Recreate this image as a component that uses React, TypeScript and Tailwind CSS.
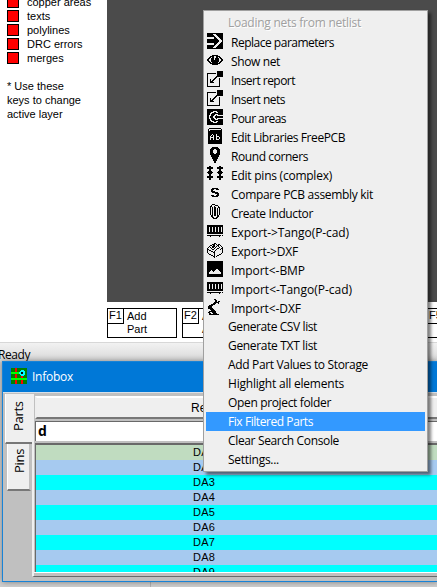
import React from "react";

type IconName = "swap" | "eye" | "insert" | "pour" | "book" | "pin" | "pins" | "s" | "clip" | "rail" | "box" | "image" | "robot";
type Item = { label: string; icon?: IconName; width: number; active?: boolean };

const items: Item[] = [
  { label: "Replace parameters", icon: "swap", width: 103 },
  { label: "Show net", icon: "eye", width: 49 },
  { label: "Insert report", icon: "insert", width: 64 },
  { label: "Insert nets", icon: "insert", width: 54 },
  { label: "Pour areas", icon: "pour", width: 55 },
  { label: "Edit Libraries FreePCB", icon: "book", width: 114 },
  { label: "Round corners", icon: "pin", width: 77 },
  { label: "Edit pins (complex)", icon: "pins", width: 101 },
  { label: "Compare PCB assembly kit", icon: "s", width: 142 },
  { label: "Create Inductor", icon: "clip", width: 82 },
  { label: "Export->Tango(P-cad)", icon: "rail", width: 118 },
  { label: "Export->DXF", icon: "box", width: 67 },
  { label: "Import<-BMP", icon: "image", width: 74 },
  { label: "Import<-Tango(P-cad)", icon: "rail", width: 121 },
  { label: "Import<-DXF", icon: "robot", width: 70 },
  { label: "Generate CSV list", width: 89 },
  { label: "Generate TXT list", width: 89 },
  { label: "Add Part Values to Storage", width: 140 },
  { label: "Highlight all elements", width: 116 },
  { label: "Open project folder", width: 103 },
  { label: "Fix Filtered Parts", width: 85, active: true },
  { label: "Clear Search Console", width: 111 },
  { label: "Settings...", width: 51 },
];

/* Text spread over a fixed advance width. */
function Label({ text, width, className = "" }: { text: string; width: number; className?: string }) {
  const ref = React.useRef<HTMLSpanElement>(null);
  const [gap, setGap] = React.useState(0);
  React.useLayoutEffect(() => {
    const el = ref.current;
    if (el) setGap((width - el.getBoundingClientRect().width) / text.length);
  }, [text, width]);
  return (
    <span ref={ref} className={"whitespace-pre " + className} style={{ letterSpacing: gap + "px" }}>
      {text}
    </span>
  );
}

/* Small monochrome bitmaps, one string per pixel row. */
const bitmaps: Partial<Record<IconName, string[]>> = {
  swap: [
    "################",
    "######...#######",
    "#######...######",
    "########...#####",
    ".......##...####",
    ".......###...###",
    "###########...##",
    "############...#",
    "############...#",
    "###########...##",
    ".......###...###",
    ".......##...####",
    "########...#####",
    "#######...######",
    "######...#######",
    "################",
  ],
  eye: [
    "................",
    "................",
    "................",
    ".....######.....",
    "...####..####...",
    "..##.##..##.##..",
    ".##.###.####.##.",
    "##..###.####..##",
    "##..########..##",
    ".##.########.##.",
    "..##.######.##..",
    "...##########...",
    ".....######.....",
    "................",
    "................",
    "................",
  ],
  insert: [
    "..........######",
    "..........######",
    "#########.######",
    "#.........######",
    "#.........######",
    "#........#######",
    "#.......##......",
    "#......##...#...",
    "#..#..##....#...",
    "#..#.##.....#...",
    "#..###......#...",
    "#..####.....#...",
    "#...........#...",
    "#...........#...",
    "#...........#...",
    "#############...",
  ],
  pour: [
    "################",
    "################",
    "######....######",
    "####...##..#####",
    "###..###########",
    "###.####...#####",
    "##..###..#......",
    "##.###..########",
    "##.###..########",
    "##..###..#......",
    "###.####...#####",
    "###..###########",
    "####...##..#####",
    "######....######",
    "################",
    "################",
  ],
  book: [
    "..############..",
    ".#............#.",
    ".#.############.",
    ".##############.",
    ".##############.",
    ".##############.",
    ".####.###.#####.",
    ".###.#.##.#####.",
    ".##.##.##...###.",
    ".##....##.##.##.",
    ".##.##.##.##.##.",
    ".##.##.##...###.",
    ".##############.",
    ".##############.",
    ".##############.",
    ".##############.",
  ],
  pin: [
    ".....######.....",
    "....########....",
    "...####..####...",
    "...###....###...",
    "...###....###...",
    "...###....###...",
    "...####..####...",
    "...##########...",
    "....########....",
    "....########....",
    ".....######.....",
    ".....######.....",
    "......####......",
    "......####......",
    ".......##.......",
    ".......##.......",
  ],
  pins: [
    "..##........##..",
    "######....######",
    "######....######",
    "..##........##..",
    "..##........##..",
    ".####......####.",
    "######....######",
    ".####......####.",
    "..##........##..",
    "..##........##..",
    "######....######",
    "######....######",
    "..##........##..",
    "..##........##..",
    "................",
    "................",
  ],
  s: [
    "................",
    "................",
    "................",
    ".....######.....",
    "....###..###....",
    "....##..........",
    "....####........",
    ".....######.....",
    "........####....",
    "..........##....",
    "....###..###....",
    ".....######.....",
    "................",
    "................",
    "................",
    "................",
  ],
  clip: [
    ".....###........",
    "....#...###.....",
    "...##..#...#....",
    "...#.#.##..##...",
    "...#.#.##.#.#...",
    "...#.#.##.#.#...",
    "...#.#.##.#.#...",
    "...#.#.##.#.#...",
    "...#.#.##.#.#...",
    "...#.#.##.#.#...",
    "...#.#.##.#.#...",
    "....##.##.##....",
    "....##....##....",
    ".....##..##.....",
    "......####......",
    "................",
  ],
  rail: [
    "................",
    "................",
    "################",
    "################",
    "##.##.##.##.##.#",
    "##.##.##.##.##.#",
    "##.##.##.##.##.#",
    "##.##.##.##.##.#",
    "##.##.##.##.##.#",
    "################",
    "################",
    "................",
    "##############.#",
    "...#........#...",
    "................",
    "................",
  ],
  box: [
    "................",
    ".......##.......",
    ".....###.#.##...",
    "...##.##..##.#..",
    "..#..###.#.#..#.",
    ".#.#.##.#...#..#",
    "#...#..#..##..##",
    "##...##..#...#.#",
    "#.##....#......#",
    "#...##.#.......#",
    "#.....##.......#",
    ".#.....#......#.",
    "..##...#....##..",
    "....##.#..##....",
    "......##.#......",
    ".......#........",
  ],
  image: [
    "################",
    "################",
    "################",
    "################",
    "################",
    "################",
    "################",
    "################",
    "#########..#####",
    "####.###....####",
    "###...#......###",
    "##............##",
    "##............##",
    "################",
    "################",
    "################",
  ],
  robot: [
    ".......##.......",
    "........##......",
    "........##.##...",
    ".......#####....",
    "......###..#....",
    "....####........",
    "..####..........",
    ".####...........",
    ".####...........",
    ".#####..........",
    "...####.........",
    "....####........",
    "..#######.......",
    ".##..####.......",
    "..##..####......",
    "..##########....",
  ],
};

function Glyph({ name }: { name: IconName }) {
  const rows = bitmaps[name] ?? [];
  return (
    <svg className="size-4 shrink-0" viewBox="0 0 16 16" shapeRendering="crispEdges">
      {rows.map((row, y) =>
        [...row].map((cell, x) => (cell === "#" ? <rect key={x + "-" + y} x={x} y={y} width="1" height="1" /> : null)),
      )}
    </svg>
  );
}

function FunctionKey({ name, lines, className = "" }: { name: string; lines: string[]; className?: string }) {
  return (
    <div className={"flex h-[30px] w-[70px] shrink-0 border border-black bg-white text-[11px] leading-[13px] " + className}>
      <div className="h-[15px] w-4 shrink-0 border-r border-b border-black pl-px">{name}</div>
      <div className="whitespace-pre pl-[3px] pt-px">{lines.join("\n")}</div>
    </div>
  );
}

function Menu() {
  return (
    <div className="absolute top-[10px] left-[203px] h-[462px] w-[225px] border border-[#a0a0a0] bg-[#efefef] px-[2px] pt-[2px] font-['Open_Sans','Noto_Sans',sans-serif] text-[12px] shadow-[3px_3px_3px_rgba(0,0,0,0.5)]">
      <div className="flex h-[19px] items-center pl-[22px] text-[#a0a0a0] [text-shadow:1px_1px_0_#fff]">
        <Label text="Loading nets from netlist" width={133} />
      </div>
      {items.map((item) => (
        <div
          key={item.label}
          className={
            "flex h-[19px] leading-[19px] " +
            (item.active ? "bg-[#3399ff] text-white " : "text-black ") +
            (item.icon ? "gap-2 pt-px pl-px" : "pl-[22px]")
          }
        >
          {item.icon && <Glyph name={item.icon} />}
          <Label text={item.label} width={item.width} />
        </div>
      ))}
    </div>
  );
}

const parts = ["DA1", "DA2", "DA3", "DA4", "DA5", "DA6", "DA7", "DA8", "DA9"];

function Infobox() {
  return (
    <section className="absolute top-[361px] left-[2px] flex h-[221px] w-[436px] flex-col border border-[#1883d7] bg-[#c0c0c0] shadow-[0_0_6px_rgba(0,0,0,0.4)]">
      <header className="flex h-[30px] shrink-0 bg-[#0078d7] pt-[6px] pl-2 text-white">
        <svg className="size-4" viewBox="0 0 16 16" shapeRendering="crispEdges">
          <rect width="16" height="16" fill="#008000" />
          <path d="M4 0h2v4H4zM4 6h2v4H4zM4 12h2v4H4zM10 8h2v2h-2zM10 12h2v4h-2z" fill="#ff0000" />
          <path d="M0 4h9v2H0zM0 10h16v2H0z" fill="#00ff00" />
          <path d="M10 2h3v1h1v4h-1v1h-3V7H9V6H8V4h1V3h1z" fill="#00ffff" />
          <rect x="10" y="4" width="2" height="2" fill="#000" />
        </svg>
        <span className="ml-[5px] font-['Open_Sans',sans-serif] text-[12px] leading-[18px]"><Label text="Infobox" width={41} /></span>
      </header>
      <div className="flex min-h-0 flex-1 border-t border-[#d8e0e8] pt-px pl-[2px]">
        <nav className="w-[27px] shrink-0">
          <div className="flex h-[50px] justify-center border-b-2 border-l border-b-[#777] border-l-white bg-[#efefef] pt-[7px] pr-[3px]">
            <span className="h-[30px] rotate-180 font-['Open_Sans',sans-serif] text-[13px] leading-[18px] tracking-[-0.3px] [writing-mode:vertical-rl]">Parts</span>
          </div>
          <div className="ml-[2px] flex h-[47px] w-[24px] justify-center border-r-2 border-b-2 border-l border-r-[#c0c0c0] border-b-[#777] border-l-white bg-[#efefef] pt-[4px]">
            <span className="h-[25px] rotate-180 font-['Open_Sans',sans-serif] text-[13px] leading-[18px] tracking-[-0.3px] [writing-mode:vertical-rl]">Pins</span>
          </div>
        </nav>
        <div className="mb-1 flex min-w-0 flex-1 flex-col border-b border-l-2 border-b-[#696969] border-l-[#efefef]">
          <div className="mt-[2px] ml-px h-[23px] shrink-0 border-t-2 border-b-2 border-l-2 border-t-white border-b-[#777] border-l-[#eee] bg-[#efefef] pl-[154px] text-[12px] leading-[20px]">Ref Des</div>
          <div className="mt-[2px] ml-px h-[20px] shrink-0 border-t border-l border-[#696969] bg-white pl-[2px] font-['Open_Sans',sans-serif] text-[14px] leading-[17px] font-bold">d</div>
          <div className="mt-[2px] ml-px h-[129px] shrink-0 overflow-hidden border-t-2 border-l border-[#696969]">
            {parts.map((part, i) => (
              <div
                key={part}
                className={"h-[15px] pl-[157px] text-[11px] leading-[15px] " + (i === 0 ? "bg-[#c0dcc0]" : i % 2 ? "bg-[#a6caf0]" : "bg-[#00ffff]")}
              >
                <Label text={part} width={22} />
              </div>
            ))}
          </div>
          <div className="h-px shrink-0 bg-white" />
        </div>
      </div>
    </section>
  );
}

export default function App() {
  return (
    <main className="relative flex h-[587px] w-[437px] flex-col overflow-hidden bg-[#cfcfcf] font-['Liberation_Sans',Arial,sans-serif] text-black">
      <div className="flex h-[302px] shrink-0 bg-white">
        <aside className="w-[107px] shrink-0 overflow-hidden pl-[7px] text-[11px] leading-[14px]">
          <div className="-mt-[5px]">
            {["copper areas", "texts", "polylines", "DRC errors", "merges"].map((name) => (
              <div key={name} className="flex h-[14px] items-center gap-2">
                <i className="size-3 border border-black bg-[#ff0000]" />
                <span>{name}</span>
              </div>
            ))}
          </div>
          <p className="mt-[14px] whitespace-pre">{"* Use these\nkeys to change\nactive layer"}</p>
        </aside>
        <div className="flex-1 bg-[#4b4b4b]" />
      </div>
      <div className="flex h-10 shrink-0 bg-white pt-[6px] pl-[107px]">
        <FunctionKey name="F1" lines={["Add", "Part"]} />
        <FunctionKey name="F2" lines={["Add", "Area"]} className="ml-[5px]" />
        <FunctionKey name="F5" lines={[""]} className="ml-[175px]" />
      </div>
      <footer className="h-5 shrink-0 border-t border-[#d7d7d7] bg-linear-to-b from-[#f2f2f2] to-[#d7d7d7] pt-1 font-['Open_Sans',sans-serif] text-[12px] leading-[16px]">
        <Label text="Ready" width={32} className="-ml-[2px]" />
      </footer>
      <div className="mt-auto ml-[150px] h-[5px] w-px bg-[#b0b0b0]" />
      <Infobox />
      <Menu />
    </main>
  );
}
